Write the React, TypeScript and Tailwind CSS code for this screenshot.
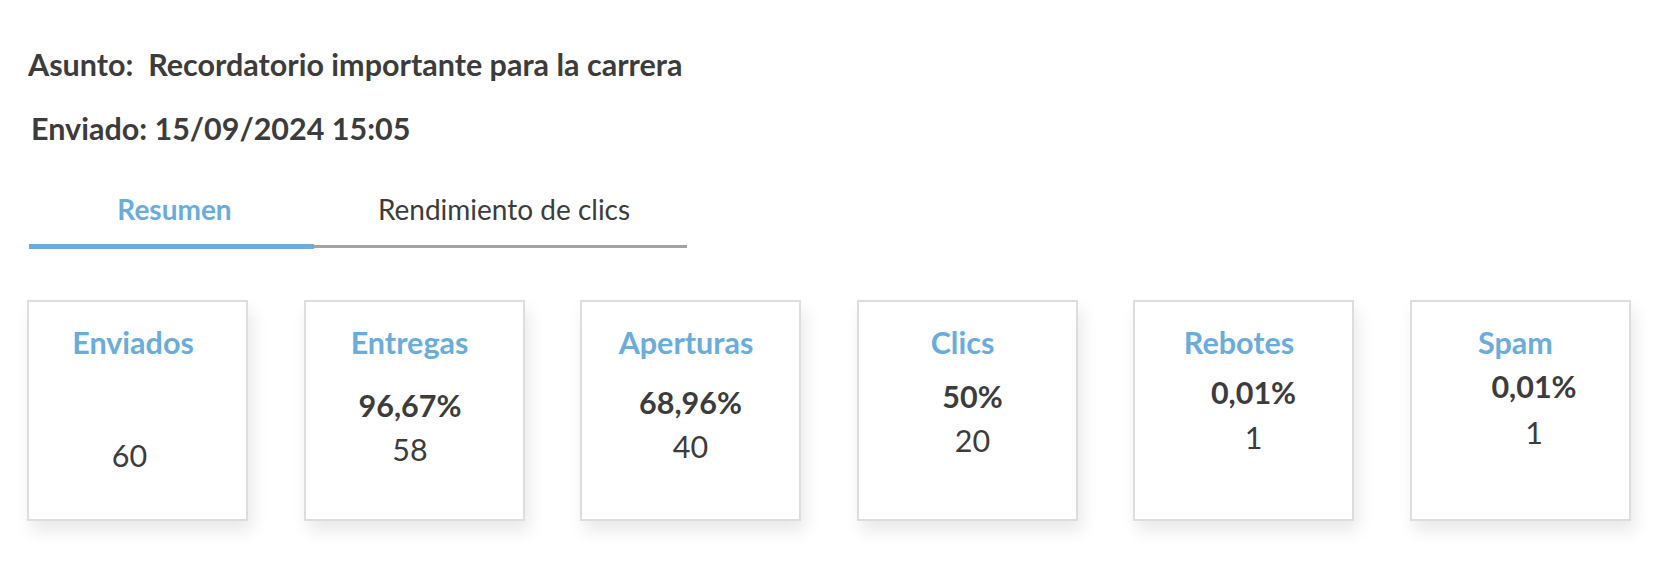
import React from "react";

const stats = [
  { title: "Enviados", pct: "", count: "60", pctGap: "", countGap: "mt-[85px]", shift: "pr-[16px]" },
  { title: "Entregas", pct: "96,67%", count: "58", pctGap: "mt-[35px]", countGap: "mt-[16px]", shift: "pr-[8px]" },
  { title: "Aperturas", pct: "68,96%", count: "40", pctGap: "mt-[32px]", countGap: "mt-[16px]", shift: "pr-0" },
  { title: "Clics", pct: "50%", count: "20", pctGap: "mt-[26px]", countGap: "mt-[16px]", shift: "pl-[11px]" },
  { title: "Rebotes", pct: "0,01%", count: "1", pctGap: "mt-[22px]", countGap: "mt-[17px]", shift: "pl-[20px]" },
  { title: "Spam", pct: "0,01%", count: "1", pctGap: "mt-[16px]", countGap: "mt-[18px]", shift: "pl-[28px]" },
];

export default function App() {
  return (
    <div className="min-h-[576px] bg-white pl-[28px] pt-[50px] font-['Lato',sans-serif] text-[#3c3c3c]">
      <p className="text-[30.5px] font-bold leading-[28px]">Asunto:&nbsp; Recordatorio importante para la carrera</p>
      <p className="mt-[36px] ml-[3px] text-[30.5px] font-bold leading-[28px]">Enviado: 15/09/2024 15:05</p>

      <div className="mt-[53px] ml-[1px] flex">
        <div className="flex w-[285px] flex-col items-center">
          <span className="pb-[21px] pl-[6px] text-[28px] font-bold leading-[28px] text-[#6aacdc]">Resumen</span>
          <div className="h-[5px] w-full bg-[#6aacdc]" />
        </div>
        <div className="flex w-[373px] flex-col items-center">
          <span className="pb-[22px] pl-[7px] text-[28px] leading-[28px]">Rendimiento de clics</span>
          <div className="mb-[1px] h-[3px] w-full bg-[#a3a3a3]" />
        </div>
      </div>

      <div className="mt-[51px] ml-[-1px] flex gap-[55.5px]">
        {stats.map((s) => (
          <div
            key={s.title}
            className="flex h-[221px] w-[221px] flex-col items-center border-2 border-[#dddddd] bg-white shadow-[4px_10px_16px_rgba(0,0,0,0.09)]"
          >
            <div className="mt-[26px] pr-[9px] text-[30.5px] font-bold leading-[28px] text-[#6aacdc]">{s.title}</div>
            <div className={`flex flex-col items-center ${s.shift}`}>
              {s.pct && <div className={`${s.pctGap} text-[30.5px] font-bold leading-[28px]`}>{s.pct}</div>}
              <div className={`${s.countGap} text-[30.5px] leading-[28px]`}>{s.count}</div>
            </div>
          </div>
        ))}
      </div>
    </div>
  );
}
